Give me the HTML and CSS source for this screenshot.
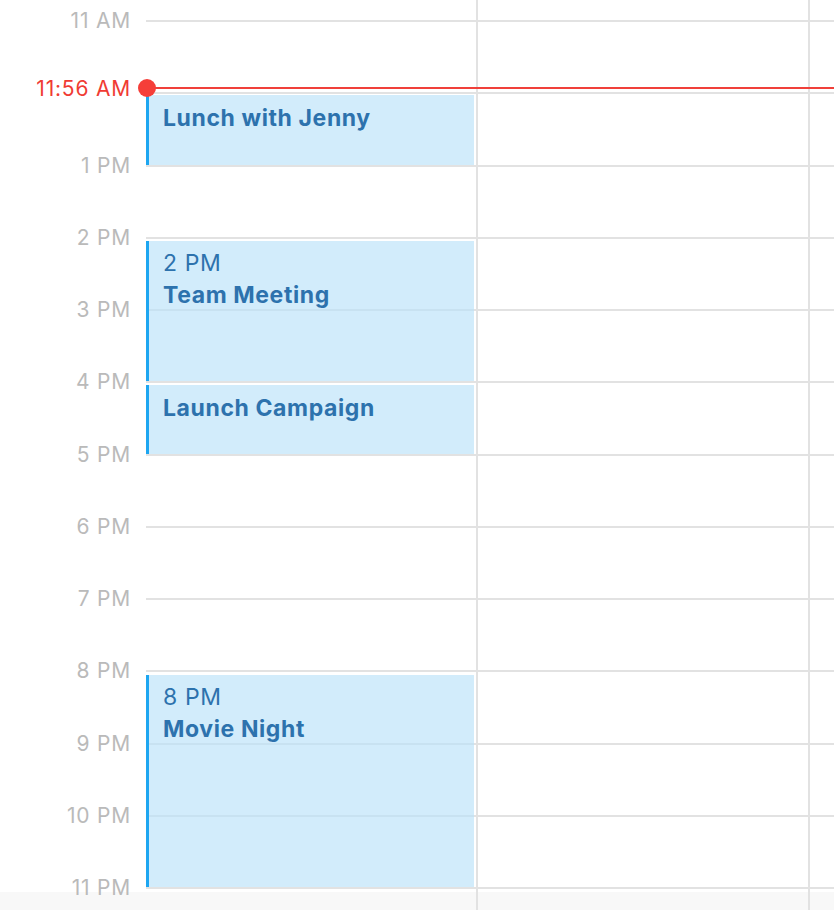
FILE: index.html
```html
<!DOCTYPE html>
<html lang="en">
<head>
<meta charset="utf-8">
<title>Day</title>
<link rel="stylesheet" href="styles.css">
</head>
<body>
<div class="calendar">
  <div class="hline r2"></div><div class="label r2">11 AM</div>
  <div class="hline r3"></div>
  <div class="hline r4"></div><div class="label r4">1 PM</div>
  <div class="hline r5"></div><div class="label r5">2 PM</div>
  <div class="hline r6"></div><div class="label r6">3 PM</div>
  <div class="hline r7"></div><div class="label r7">4 PM</div>
  <div class="hline r8"></div><div class="label r8">5 PM</div>
  <div class="hline r9"></div><div class="label r9">6 PM</div>
  <div class="hline r10"></div><div class="label r10">7 PM</div>
  <div class="hline r11"></div><div class="label r11">8 PM</div>
  <div class="hline r12"></div><div class="label r12">9 PM</div>
  <div class="hline r13"></div><div class="label r13">10 PM</div>
  <div class="hline r14"></div><div class="label r14">11 PM</div>

  <div class="footer-band"></div>
  <div class="vline c3"></div>
  <div class="vline c5"></div>

  <div class="event ev-lunch">
    <div class="ev-title">Lunch with Jenny</div>
  </div>
  <div class="event ev-team">
    <div class="ev-time">2 PM</div>
    <div class="ev-title">Team Meeting</div>
  </div>
  <div class="event ev-launch">
    <div class="ev-title">Launch Campaign</div>
  </div>
  <div class="event ev-movie">
    <div class="ev-time">8 PM</div>
    <div class="ev-title">Movie Night</div>
  </div>

  <div class="now-label">11:56 AM</div>
  <div class="now-line"></div>
</div>
</body>
</html>
```

FILE: styles.css
```css
html, body {
  margin: 0;
  padding: 0;
  background: #ffffff;
}

body {
  width: 834px;
  height: 910px;
  overflow: hidden;
  font-family: Inter, "Liberation Sans", sans-serif;
}

.calendar {
  display: grid;
  grid-template-columns: 146px 330px 2px 330px 2px 1fr;
  grid-template-rows: 20px repeat(12, 72.25px) 23px;
  height: 910px;
}

.r2 { grid-row: 2; }
.r3 { grid-row: 3; }
.r4 { grid-row: 4; }
.r5 { grid-row: 5; }
.r6 { grid-row: 6; }
.r7 { grid-row: 7; }
.r8 { grid-row: 8; }
.r9 { grid-row: 9; }
.r10 { grid-row: 10; }
.r11 { grid-row: 11; }
.r12 { grid-row: 12; }
.r13 { grid-row: 13; }
.r14 { grid-row: 14; }

.hline {
  grid-column: 2 / -1;
  align-self: start;
  height: 2px;
  background: #e2e2e2;
  z-index: 1;
}

.label {
  grid-column: 1;
  align-self: start;
  justify-self: end;
  padding-right: 15px;
  margin-top: -11px;
  height: 24px;
  line-height: 24px;
  font-size: 21px;
  letter-spacing: 0.8px;
  color: #bababa;
  z-index: 3;
}

.vline {
  grid-row: 1 / -1;
  background: #e2e2e2;
  z-index: 1;
}
.vline.c3 { grid-column: 3; }
.vline.c5 { grid-column: 5; }

.footer-band {
  grid-row: 14;
  grid-column: 1 / -1;
  margin-top: 5px;
  background: #f8f8f8;
  z-index: 0;
}

.event {
  grid-column: 2;
  margin-top: 3px;
  margin-right: 2px;
  border-left: 3px solid #1da6f1;
  background: rgba(186, 226, 249, 0.66);
  padding: 7px 14px 0;
  box-sizing: border-box;
  color: #2d72ad;
  font-size: 23px;
  letter-spacing: 0.6px;
  line-height: 32px;
  z-index: 2;
  overflow: hidden;
}

.ev-lunch { grid-row: 3 / 4; }
.ev-team { grid-row: 5 / 7; margin-top: 4px; padding-top: 6px; }
.ev-launch { grid-row: 7 / 8; margin-top: 3.5px; }
.ev-movie { grid-row: 11 / 14; margin-top: 4.5px; padding-top: 6px; }

.ev-title {
  font-weight: 700;
}

.ev-time {
  font-weight: 400;
}

.now-label {
  grid-column: 1;
  grid-row: 2;
  align-self: start;
  justify-self: end;
  padding-right: 15px;
  margin-top: 57px;
  height: 24px;
  line-height: 24px;
  font-size: 21px;
  letter-spacing: 0.8px;
  color: #f03b33;
  z-index: 3;
}

.now-line {
  grid-column: 2 / -1;
  grid-row: 2;
  align-self: start;
  margin-top: 67px;
  height: 2px;
  background: #f0403a;
  position: relative;
  z-index: 4;
}

.now-line::before {
  content: "";
  position: absolute;
  left: -8px;
  top: -8px;
  width: 18px;
  height: 18px;
  border-radius: 50%;
  background: #f53e39;
}
```
